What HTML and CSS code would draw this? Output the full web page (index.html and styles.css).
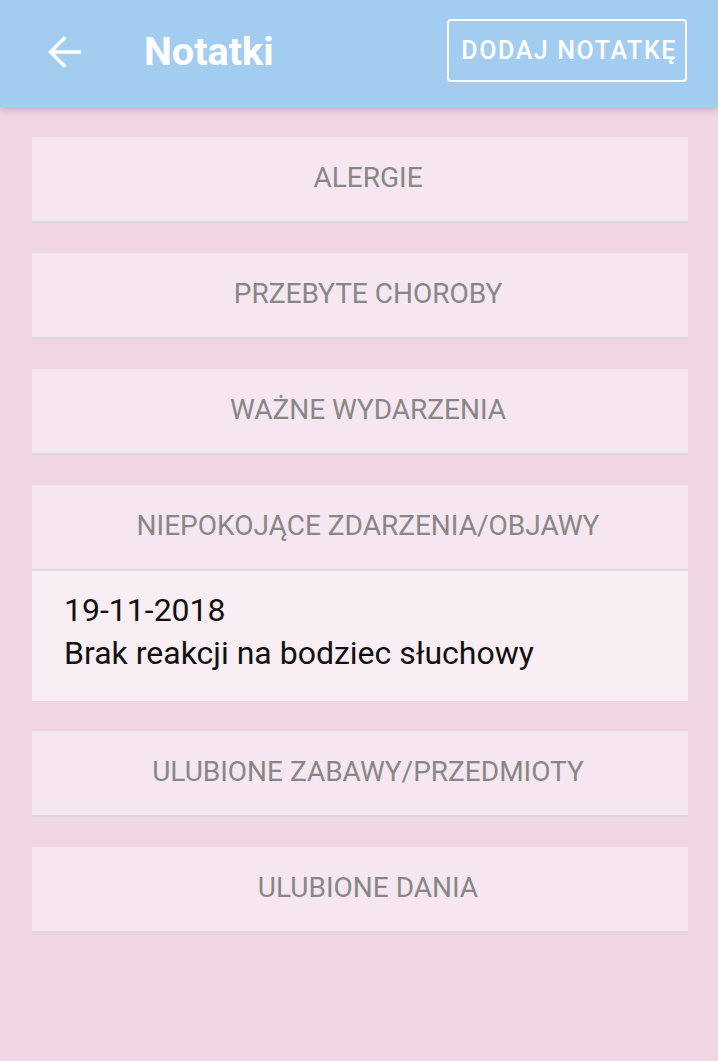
FILE: index.html
```html
<!DOCTYPE html>
<html lang="pl">
<head>
<meta charset="utf-8">
<title>Notatki</title>
<link rel="stylesheet" href="styles.css">
</head>
<body>
<header class="appbar">
  <button class="back" aria-label="Wstecz">
    <svg width="34" height="34" viewBox="0 0 34 34"><path d="M33 17H4M17 3.5L3.5 17L17 30.5" fill="none" stroke="#fff" stroke-width="3.4" stroke-linecap="square"/></svg>
  </button>
  <h1 class="title">Notatki</h1>
  <button class="add">DODAJ NOTATKĘ</button>
</header>
<main class="list">
  <section class="card"><div class="card-head">ALERGIE</div></section>
  <section class="card"><div class="card-head">PRZEBYTE CHOROBY</div></section>
  <section class="card"><div class="card-head">WAŻNE WYDARZENIA</div></section>
  <section class="card open">
    <div class="card-head">NIEPOKOJĄCE ZDARZENIA/OBJAWY</div>
    <div class="card-body">
      <div class="note-date">19-11-2018</div>
      <div class="note-text">Brak reakcji na bodziec słuchowy</div>
    </div>
  </section>
  <section class="card"><div class="card-head">ULUBIONE ZABAWY/PRZEDMIOTY</div></section>
  <section class="card"><div class="card-head">ULUBIONE DANIA</div></section>
</main>
</body>
</html>
```

FILE: styles.css
```css
html, body {
  margin: 0;
  padding: 0;
}
body {
  width: 718px;
  min-height: 1061px;
  background: #f0d6e4;
  font-family: Roboto, "Noto Sans", sans-serif;
}
.appbar {
  position: relative;
  z-index: 2;
  height: 107px;
  box-sizing: border-box;
  padding-bottom: 4px;
  background: #a3cdf0;
  display: flex;
  align-items: center;
  box-shadow: 0 3px 8px rgba(90, 60, 80, 0.28);
}
.back {
  margin-left: 47px;
  width: 34px;
  height: 34px;
  padding: 0;
  border: 0;
  background: none;
  display: flex;
  align-items: center;
  justify-content: center;
}
.title {
  margin: 0 0 0 63px;
  color: #fff;
  font-size: 39.5px;
  font-weight: 700;
  line-height: 1;
  flex: 1;
}
.add {
  margin-right: 31px;
  margin-bottom: 2px;
  height: 63px;
  padding: 0 8px 0 12px;
  border: 2px solid #fff;
  border-radius: 4px;
  background: transparent;
  color: #fff;
  font-family: Roboto, "Noto Sans", sans-serif;
  font-size: 25px;
  font-weight: 500;
  letter-spacing: 1.6px;
}
.list {
  padding: 30px 30px 0 32px;
  display: flex;
  flex-direction: column;
  gap: 30px;
}
.card {
  background: #f6e6ef;
  border-bottom: 2px solid #dcd8da;
}
.card.open {
  border-bottom: 0;
}
.card-head {
  height: 84px;
  box-sizing: border-box;
  padding: 0 0 3px 16px;
  display: flex;
  align-items: center;
  justify-content: center;
  color: #878787;
  font-size: 28px;
}
.card.open .card-head {
  height: 84px;
  border-bottom: 2px solid #dcd8da;
  box-sizing: content-box;
  height: 81px;
}
.card-body {
  background: #f8eef4;
  padding: 18px 32px 26px;
  color: #111;
  font-size: 32px;
  line-height: 43px;
}
```
